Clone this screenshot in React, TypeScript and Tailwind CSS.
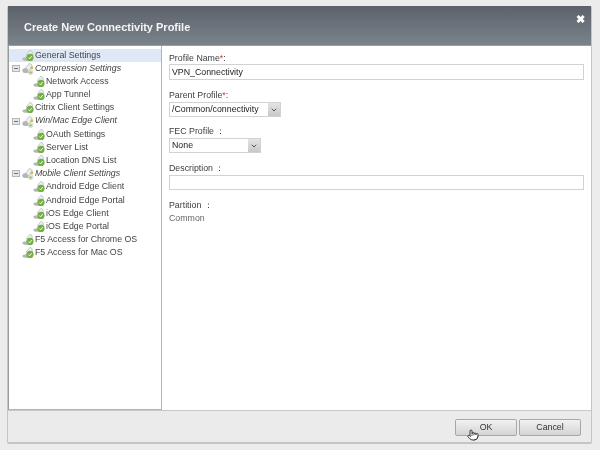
import React from 'react';
import { Pointer, ChevronDown } from 'lucide-react';

interface TreeItem {
    label: string;
    level: number;
    group?: boolean;
    selected?: boolean;
}

const treeItems: TreeItem[] = [
    { label: 'General Settings', level: 0, selected: true },
    { label: 'Compression Settings', level: 0, group: true },
    { label: 'Network Access', level: 1 },
    { label: 'App Tunnel', level: 1 },
    { label: 'Citrix Client Settings', level: 0 },
    { label: 'Win/Mac Edge Client', level: 0, group: true },
    { label: 'OAuth Settings', level: 1 },
    { label: 'Server List', level: 1 },
    { label: 'Location DNS List', level: 1 },
    { label: 'Mobile Client Settings', level: 0, group: true },
    { label: 'Android Edge Client', level: 1 },
    { label: 'Android Edge Portal', level: 1 },
    { label: 'iOS Edge Client', level: 1 },
    { label: 'iOS Edge Portal', level: 1 },
    { label: 'F5 Access for Chrome OS', level: 0 },
    { label: 'F5 Access for Mac OS', level: 0 },
];

const PageIcon = () => (
    <svg width="13" height="13" viewBox="0 0 13 13" className="shrink-0">
        <ellipse cx="4" cy="10" rx="3.6" ry="1.8" fill="#b4b7ba" />
        <path d="M4.5 5.5L8 1.2l2.2 1.6V6L6 9z" fill="#eceeef" stroke="#a9adb1" strokeWidth="0.6" />
        <circle cx="8" cy="8.4" r="3.6" fill="#72b045" />
        <path d="M6.3 8.5l1.3 1.4 2.1-2.8" fill="none" stroke="#f4f8ef" strokeWidth="1" />
    </svg>
);

const GroupIcon = () => (
    <svg width="13" height="13" viewBox="0 0 13 13" className="shrink-0">
        <ellipse cx="3.8" cy="8.5" rx="3.5" ry="2.6" fill="#b4b7ba" />
        <path d="M4 5.5L7.5 1.2l2.5 1.8V6L6 9z" fill="#eceeef" stroke="#a9adb1" strokeWidth="0.6" />
        <circle cx="9.8" cy="5.8" r="1.5" fill="#d9b93f" />
        <circle cx="8.6" cy="10.2" r="2.4" fill="#f0f0ea" stroke="#b8bbb0" strokeWidth="0.5" />
        <circle cx="8.6" cy="10.4" r="1.2" fill="#8abb5a" />
    </svg>
);

const Expander = () => (
    <span className="w-[8px] h-[7px] border border-[#b4b7ba] bg-[#e4e6e8] flex items-center justify-center shrink-0">
        <span className="w-[4px] h-px bg-[#6d7074]" />
    </span>
);

const TreeRow = ({ item }: { item: TreeItem }) => (
    <div className={`h-[13.2px] flex items-center pl-[3px] ${item.selected ? 'bg-[#dfe8f6]' : ''}`}>
        <span className="w-[8px] shrink-0 flex">{item.group && <Expander />}</span>
        <span className={item.level === 1 ? 'w-[13px] shrink-0' : 'w-[2px] shrink-0'} />
        {item.group ? <GroupIcon /> : <PageIcon />}
        <span className={`whitespace-nowrap ${item.group ? 'italic' : ''}`}>{item.label}</span>
    </div>
);

const Label = ({ children }: { children: React.ReactNode }) => (
    <div className="h-[11px] leading-[11px] text-[#3d3d3d]">{children}</div>
);

const Select = ({ value, width }: { value: string; width: string }) => (
    <div className={`${width} h-[15px] border border-[#d2d2d2] bg-white flex items-center`}>
        <span className="flex-1 pl-[2px] text-[#222]">{value}</span>
        <span className="w-[12px] h-full bg-gradient-to-b from-[#e4e4e4] to-[#c8c8c8] flex items-center justify-center">
            <ChevronDown size={8} strokeWidth={3} className="text-[#555]" />
        </span>
    </div>
);

export default function App() {
    return (
        <div className="w-[600px] h-[450px] bg-[#ececec] pt-[6px] pl-[7px] text-[8.8px] text-[#444] [font-family:'Liberation_Sans',Arial,sans-serif] overflow-hidden blur-[0.4px]">
            <div className="w-[585px] h-[438px] flex flex-col rounded-[2px] border-b-2 border-r border-l border-[#c4c4c4]">
                {/* title bar */}
                <div className="h-[40px] shrink-0 bg-gradient-to-b from-[#5c6269] to-[#7b838c] flex items-center justify-between pl-[16px] pr-[6px] pt-[4px] border-b border-[#9a9ea3]">
                    <span className="text-[11px] font-bold text-[#f4f5f6]">Create New Connectivity Profile</span>
                    <span className="text-[11px] font-bold text-white leading-none -mt-[16px]">✖</span>
                </div>

                {/* body */}
                <div className="h-[365px] shrink-0 flex bg-white border-b border-[#c8c8c8]">
                    <div className="w-[154px] shrink-0 border-r border-[#b4b4b4] border-l border-l-[#9a9a9a] border-b border-b-[#b4b4b4] pt-[2.5px]">
                        {treeItems.map(item => (
                            <TreeRow key={item.label} item={item} />
                        ))}
                    </div>
                    <div className="flex-1 pl-[7px] pr-[7px] pt-[7px] flex flex-col">
                        <Label>Profile Name<span className="text-[#c33]">*</span>:</Label>
                        <div className="h-[16px] border border-[#d2d2d2] pl-[2px] pt-[1px] flex items-center text-[#222]">VPN_Connectivity</div>
                        <div className="mt-[10px]"><Label>Parent Profile<span className="text-[#c33]">*</span>:</Label></div>
                        <div className="mt-[1px]"><Select value="/Common/connectivity" width="w-[112px]" /></div>
                        <div className="mt-[9px]"><Label>FEC Profile ：</Label></div>
                        <div className="mt-[1px]"><Select value="None" width="w-[92px]" /></div>
                        <div className="mt-[10px]"><Label>Description ：</Label></div>
                        <div className="mt-[1px] h-[15px] border border-[#d2d2d2]" />
                        <div className="mt-[10px]"><Label>Partition ：</Label></div>
                        <div className="mt-[1px] h-[12px] leading-[12px] text-[#666]">Common</div>
                    </div>
                </div>

                {/* footer */}
                <div className="flex-1 bg-[#ebebeb] flex justify-end items-start gap-[2px] pt-[8px] pr-[10px]">
                    <button className="relative w-[62px] h-[17px] rounded-[2px] border border-[#a8a8a8] bg-gradient-to-b from-[#f2f2f2] to-[#d4d4d4] text-[#333]">
                        OK
                        <Pointer size={12} className="absolute left-[11px] top-[9px] text-[#333] fill-white" />
                    </button>
                    <button className="w-[62px] h-[17px] rounded-[2px] border border-[#a8a8a8] bg-gradient-to-b from-[#f2f2f2] to-[#d4d4d4] text-[#333]">
                        Cancel
                    </button>
                </div>
            </div>
        </div>
    );
}
